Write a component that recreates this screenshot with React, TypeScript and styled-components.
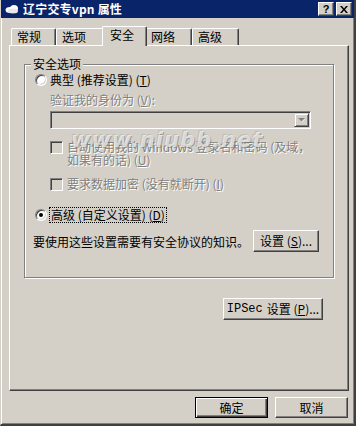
import React from 'react'
import styled, { createGlobalStyle } from 'styled-components'

const GlobalStyle = createGlobalStyle`
  html, body {
    margin: 0;
    padding: 0;
    background: #d4d0c8;
  }
  body {
    font-family: "Noto Sans CJK SC", "Noto Sans", "Liberation Sans", sans-serif;
    font-size: 12px;
    color: #000;
  }
`

const Window = styled.div`
  position: relative;
  width: 356px;
  height: 426px;
  box-sizing: border-box;
  background: #d4d0c8;
  display: flex;
  flex-direction: column;
  border-left: 1px solid #d4d0c8;
  border-right: 2px solid #404040;
  border-bottom: 2px solid #404040;
  box-shadow: inset 1px 0 #fff, inset -1px -1px #808080;
  overflow: hidden;
`

const TitleBar = styled.div`
  height: 18px;
  background: #0a246a;
  display: flex;
  align-items: center;
  padding: 0 2px 0 4px;
  flex: none;
`

const TitleText = styled.span`
  color: #fff;
  font-weight: bold;
  font-size: 12px;
  line-height: 14px;
  margin-left: 4px;
  letter-spacing: 0.2px;
`

const CaptionButtons = styled.div`
  margin-left: auto;
  display: flex;
  gap: 2px;
`

const CaptionButton = styled.div`
  width: 16px;
  height: 14px;
  box-sizing: border-box;
  background: #d4d0c8;
  border: 1px solid;
  border-color: #fff #404040 #404040 #fff;
  box-shadow: inset -1px -1px #808080;
  display: flex;
  align-items: center;
  justify-content: center;
  font-family: "Liberation Sans", sans-serif;
  font-weight: bold;
  font-size: 11px;
  line-height: 12px;
`

const Body = styled.div`
  flex: 1;
  display: flex;
  flex-direction: column;
  padding: 8px 5px 0 8px;
`

const TabStrip = styled.div`
  display: flex;
  align-items: flex-end;
  height: 19px;
  padding-left: 2px;
  position: relative;
  z-index: 1;
`

const Tab = styled.div<{ $w: number; $active?: boolean }>`
  width: ${p => p.$w}px;
  height: ${p => (p.$active ? 20 : 17)}px;
  box-sizing: border-box;
  margin: ${p => (p.$active ? '0 -2px -1px -2px' : '0')};
  padding-left: ${p => (p.$active ? 7 : 5)}px;
  background: #d4d0c8;
  border-top: 1px solid #fff;
  border-left: 1px solid #fff;
  border-right: 1px solid #404040;
  border-radius: 2px 2px 0 0;
  box-shadow: inset -1px 0 #808080;
  display: flex;
  align-items: ${p => (p.$active ? 'flex-start' : 'center')};
  padding-top: ${p => (p.$active ? 1 : 0)}px;
  line-height: 14px;
  position: relative;
  z-index: ${p => (p.$active ? 2 : 1)};
`

const Panel = styled.div`
  height: 346px;
  box-sizing: border-box;
  border-top: 1px solid #fff;
  border-left: 1px solid #fff;
  border-right: 1px solid #404040;
  border-bottom: 1px solid #404040;
  box-shadow: inset -1px -1px #808080;
  padding: 18px 14px 0 14px;
  display: flex;
  flex-direction: column;
`

const GroupBox = styled.div`
  position: relative;
  height: 214px;
  box-sizing: border-box;
  border: 1px solid #808080;
  box-shadow: 1px 1px 0 #fff, inset 1px 1px 0 #fff;
  padding: 1px 10px 0 9px;
  display: flex;
  flex-direction: column;
`

const GroupCaption = styled.span`
  position: absolute;
  top: -8px;
  left: 6px;
  padding: 0 2px;
  background: #d4d0c8;
  line-height: 14px;
`

const Row = styled.div<{ $top: number; $indent?: number }>`
  display: flex;
  align-items: center;
  margin-top: ${p => p.$top}px;
  margin-left: ${p => p.$indent ?? 0}px;
  min-height: 14px;
  line-height: 14px;
`

const Label = styled.span<{ $disabled?: boolean; $focus?: boolean }>`
  color: ${p => (p.$disabled ? '#808080' : '#000')};
  text-shadow: ${p => (p.$disabled ? '1px 1px 0 #fff' : 'none')};
  outline: ${p => (p.$focus ? '1px dotted #000' : 'none')};
  outline-offset: 0;
  padding: ${p => (p.$focus ? '0 1px' : '0')};
  white-space: nowrap;
`

const Radio = styled.span<{ $checked?: boolean }>`
  width: 12px;
  height: 12px;
  box-sizing: border-box;
  border-radius: 50%;
  flex: none;
  margin: 0 3px 0 1px;
  background: #fff;
  border: 1px solid;
  border-color: #808080 #fff #fff #808080;
  box-shadow: inset 1px 1px #404040, inset -1px -1px #d4d0c8;
  position: relative;
  &::after {
    content: '';
    display: ${p => (p.$checked ? 'block' : 'none')};
    position: absolute;
    left: 3px;
    top: 3px;
    width: 4px;
    height: 4px;
    border-radius: 50%;
    background: #000;
  }
`

const Check = styled.span`
  width: 13px;
  height: 13px;
  box-sizing: border-box;
  flex: none;
  margin-right: 4px;
  background: #d4d0c8;
  border: 1px solid;
  border-color: #808080 #fff #fff #808080;
  box-shadow: inset 1px 1px #404040, inset -1px -1px #d4d0c8;
`

const CheckBlock = styled.div<{ $top: number }>`
  display: flex;
  align-items: flex-start;
  margin: ${p => p.$top}px 0 0 16px;
  line-height: 13px;
  & > ${Check} {
    margin-top: 1px;
  }
`

const Combo = styled.div`
  margin: 4px 0 0 16px;
  width: 261px;
  height: 18px;
  box-sizing: border-box;
  background: #d4d0c8;
  border: 1px solid;
  border-color: #808080 #fff #fff #808080;
  box-shadow: inset 1px 1px #404040, inset -1px -1px #d4d0c8;
  display: flex;
  justify-content: flex-end;
  padding: 1px;
`

const ComboArrow = styled.div`
  width: 15px;
  height: 14px;
  box-sizing: border-box;
  background: #d4d0c8;
  border: 1px solid;
  border-color: #d4d0c8 #404040 #404040 #d4d0c8;
  box-shadow: inset 1px 1px #fff, inset -1px -1px #808080;
  display: flex;
  align-items: center;
  justify-content: center;
`

const InfoRow = styled.div`
  display: flex;
  align-items: center;
  margin-top: 8px;
  margin-left: -1px;
`

const Button = styled.div<{ $w: number; $h?: number; $default?: boolean }>`
  width: ${p => p.$w}px;
  height: ${p => p.$h ?? 22}px;
  box-sizing: border-box;
  background: #d4d0c8;
  border: 1px solid;
  border-color: ${p => (p.$default ? '#000' : '#fff #404040 #404040 #fff')};
  box-shadow: ${p =>
    p.$default
      ? 'inset 1px 1px #fff, inset -1px -1px #404040, inset -2px -2px #808080'
      : 'inset -1px -1px #808080'};
  display: flex;
  align-items: center;
  justify-content: center;
  line-height: 14px;
  white-space: nowrap;
  flex: none;
`

const Mono = styled.span`
  font-family: "Liberation Mono", monospace;
  font-size: 12px;
  margin-right: 4px;
`

const Footer = styled.div`
  display: flex;
  justify-content: flex-end;
  gap: 7px;
  padding: 6px 1px 0 0;
`

const Watermark = styled.div`
  position: absolute;
  left: 70px;
  top: 131px;
  font-family: "DejaVu Sans", "Liberation Sans", sans-serif;
  font-weight: bold;
  font-style: italic;
  font-size: 21px;
  line-height: 18px;
  letter-spacing: 1px;
  color: rgba(255, 255, 255, 0.65);
  text-shadow: 1px 1px 0 rgba(110, 110, 110, 0.5), -1px -1px 0 rgba(150, 150, 150, 0.35);
  pointer-events: none;
`

const NetIcon = () => (
  <svg width="14" height="10" viewBox="0 0 14 10">
    <ellipse cx="5" cy="6" rx="4.5" ry="3" fill="#fff" />
    <ellipse cx="9" cy="4.5" rx="4" ry="3.5" fill="#fff" />
    <ellipse cx="8" cy="7" rx="5" ry="2.5" fill="#e8e8e8" />
  </svg>
)

const CloseGlyph = () => (
  <svg width="8" height="7" viewBox="0 0 8 7">
    <path d="M0 0h2l2 2.5L6 0h2L5 3.5 8 7H6L4 4.5 2 7H0l3-3.5z" fill="#000" />
  </svg>
)

const DownArrow = () => (
  <svg width="7" height="5" viewBox="0 0 7 5">
    <path d="M1 1h6L4 4z" fill="#fff" />
    <path d="M0 0h7L3.5 3.5z" fill="#808080" />
  </svg>
)

const tabs = [
  { label: '常规', w: 45 },
  { label: '选项', w: 48 },
  { label: '安全', w: 45, active: true },
  { label: '网络', w: 47 },
  { label: '高级', w: 47 },
]

export default function App() {
  return (
    <>
      <GlobalStyle />
      <Window>
        <TitleBar>
          <NetIcon />
          <TitleText>辽宁交专vpn 属性</TitleText>
          <CaptionButtons>
            <CaptionButton>?</CaptionButton>
            <CaptionButton>
              <CloseGlyph />
            </CaptionButton>
          </CaptionButtons>
        </TitleBar>
        <Body>
          <TabStrip>
            {tabs.map(t => (
              <Tab key={t.label} $w={t.w} $active={t.active}>
                {t.label}
              </Tab>
            ))}
          </TabStrip>
          <Panel>
            <GroupBox>
              <GroupCaption>安全选项</GroupCaption>
              <Row $top={7}>
                <Radio />
                <Label>
                  典型 (推荐设置) (<u>T</u>)
                </Label>
              </Row>
              <Row $top={6} $indent={16}>
                <Label $disabled>
                  验证我的身份为 (<u>V</u>):
                </Label>
              </Row>
              <Combo>
                <ComboArrow>
                  <DownArrow />
                </ComboArrow>
              </Combo>
              <CheckBlock $top={11}>
                <Check />
                <Label $disabled>
                  自动使用我的 Windows 登录名和密码 (及域，
                  <br />
                  如果有的话) (<u>U</u>)
                </Label>
              </CheckBlock>
              <Row $top={11} $indent={16}>
                <Check />
                <Label $disabled>
                  要求数据加密 (没有就断开) (<u>I</u>)
                </Label>
              </Row>
              <Row $top={17}>
                <Radio $checked />
                <Label $focus>
                  高级 (自定义设置) (<u>D</u>)
                </Label>
              </Row>
              <InfoRow>
                <Label>要使用这些设置需要有安全协议的知识。</Label>
                <Button $w={66} style={{ marginLeft: 'auto', marginRight: 4 }}>
                  设置 (<u>S</u>)...
                </Button>
              </InfoRow>
            </GroupBox>
            <Button $w={100} style={{ alignSelf: 'flex-end', marginTop: 20, marginRight: 11 }}>
              <Mono>IPSec</Mono>设置 (<u>P</u>)...
            </Button>
          </Panel>
          <Footer>
            <Button $w={73} $h={21} $default>
              确定
            </Button>
            <Button $w={73} $h={21}>
              取消
            </Button>
          </Footer>
        </Body>
        <Watermark>www.niubb.net</Watermark>
      </Window>
    </>
  )
}
